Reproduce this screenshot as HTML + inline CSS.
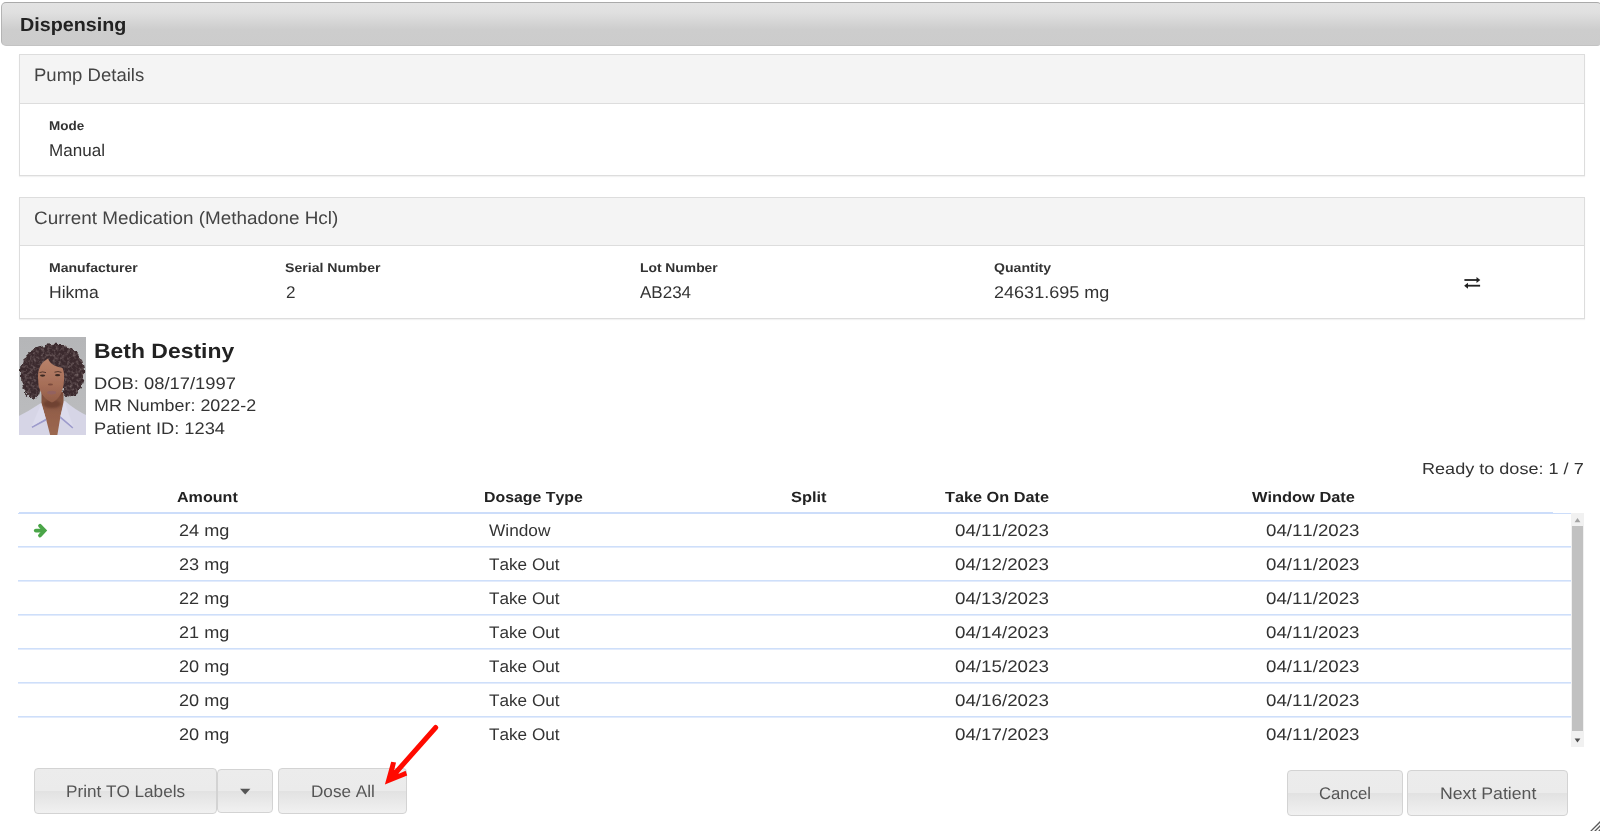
<!DOCTYPE html>
<html lang="en">
<head>
<meta charset="utf-8">
<title>Dispensing</title>
<style>
html,body{margin:0;padding:0;background:#fff;overflow:hidden;}
body{width:1600px;height:831px;position:relative;overflow:hidden;font-family:"Liberation Sans",sans-serif;font-kerning:none;}
.abs{position:absolute;box-sizing:border-box;}
.t{position:absolute;white-space:nowrap;text-rendering:geometricPrecision;line-height:40px;height:40px;transform-origin:0 0;display:block;}
.titlebar{left:1px;top:2px;width:1601px;height:44px;border:1px solid #aaa;border-bottom-color:#c3c3c3;border-left-color:#b4b4b4;border-radius:5px;
  background:linear-gradient(to bottom,#e3e3e3 0%,#e0e0e0 22%,#cdcdcd 64%,#cccccc 100%);}
.panel{left:19px;width:1566px;height:122px;border:1px solid #ddd;background:#fff;box-shadow:0 1px 1px rgba(0,0,0,.05);}
.panel .hd{position:absolute;left:0;top:0;right:0;height:49px;background:#f4f4f4;border-bottom:1px solid #ddd;box-sizing:border-box;}
.hline{background:#ccddfa;}
.rline{left:18px;width:1553px;height:2px;background:linear-gradient(to bottom,#cedffa 0,#cedffa 50%,#e2ebfc 50%,#e2ebfc 100%);}
.btn{border:1px solid #d3d3d3;border-radius:4px;
  background:linear-gradient(to bottom,#ececec 0%,#ebebeb 50%,#e2e2e2 51%,#f1f1f1 100%);}
</style>
</head>
<body>
<div id="app" class="abs" style="left:0;top:0;width:1600px;height:831px;overflow:hidden;">
<div class="abs titlebar"></div>

<div class="abs panel" style="top:54px;"><div class="hd"></div></div>
<div class="abs panel" style="top:197px;"><div class="hd" style="height:48px;"></div></div>

<!-- exchange icon -->
<svg class="abs" style="left:1462px;top:274px;" width="20" height="18" viewBox="0 0 20 18">
  <g fill="#222">
    <rect x="2.4" y="5.1" width="13.6" height="1.8"/><path d="M14.5 2.9L18.3 6L14.5 9.1Z"/>
    <rect x="4" y="10.8" width="14.1" height="1.8"/><path d="M6 8.7L2.1 11.7L6 14.8Z"/>
  </g>
</svg>

<!-- photo -->
<svg class="abs" style="left:19px;top:337px;" width="67" height="98" viewBox="0 0 67 98">
  <defs>
    <filter id="curl" x="-20%" y="-20%" width="140%" height="140%">
      <feTurbulence type="fractalNoise" baseFrequency="0.22" numOctaves="2" seed="7" result="n"/>
      <feDisplacementMap in="SourceGraphic" in2="n" scale="7" xChannelSelector="R" yChannelSelector="G" result="d"/>
      <feGaussianBlur in="d" stdDeviation="0.55"/>
    </filter>
    <filter id="tex" x="0" y="0" width="100%" height="100%">
      <feTurbulence type="fractalNoise" baseFrequency="0.35" numOctaves="2" seed="3" result="n"/>
      <feColorMatrix in="n" type="matrix" values="0 0 0 0 0.42  0 0 0 0 0.34  0 0 0 0 0.33  0 0 0 2.2 -0.95" result="c"/>
      <feComposite in="c" in2="SourceGraphic" operator="in"/>
      <feGaussianBlur stdDeviation="0.5"/>
    </filter>
    <filter id="b1" x="-20%" y="-20%" width="140%" height="140%"><feGaussianBlur stdDeviation="1.1"/></filter>
    <filter id="b2" x="-20%" y="-20%" width="140%" height="140%"><feGaussianBlur stdDeviation="0.7"/></filter>
    <linearGradient id="bgg" x1="0" y1="0" x2="0" y2="1"><stop offset="0" stop-color="#b5b6b8"/><stop offset="1" stop-color="#bcbdbf"/></linearGradient>
    <linearGradient id="skin" x1="0" y1="0" x2="0" y2="1"><stop offset="0" stop-color="#b8826a"/><stop offset="0.6" stop-color="#a66e58"/><stop offset="1" stop-color="#915c47"/></linearGradient>
    <linearGradient id="neck" x1="0" y1="0" x2="0" y2="1"><stop offset="0" stop-color="#7a4a38"/><stop offset="0.5" stop-color="#94604a"/><stop offset="1" stop-color="#9c6850"/></linearGradient>
    <clipPath id="pc"><rect x="0" y="0" width="67" height="98"/></clipPath>
  </defs>
  <g clip-path="url(#pc)">
    <rect width="67" height="98" fill="url(#bgg)"/>
    <!-- shirt -->
    <path d="M-2 99 L-2 80 Q10 74 22 66 L46 64 Q56 73 69 79 L69 99 Z" fill="#d6d5e6" filter="url(#b2)"/>
    <!-- neck + V opening -->
    <path d="M22.5 56 L22.5 67 L27 82 L31.4 99 L38.2 99 L41.5 79 L44.5 65 L44.5 55 Z" fill="url(#neck)" filter="url(#b2)"/>
    <!-- collar shadows -->
    <path d="M12.6 89.6 L26.9 81.6 L27.4 83.4 L13.2 91 Z" fill="#9d9bcc" filter="url(#b2)"/>
    <path d="M54.3 90.2 L41.4 79 L40.9 80.9 L53.4 91.4 Z" fill="#9d9bcc" filter="url(#b2)"/>
    <path d="M22.5 66 L12.6 89.4 L26.7 81.5 Z" fill="#dcdbec" filter="url(#b2)"/>
    <path d="M45.6 64.4 L54.3 90 L41.5 79 Z" fill="#dcdbec" filter="url(#b2)"/>
    <ellipse cx="33" cy="67" rx="9" ry="4" fill="#6f4232" filter="url(#b1)"/>
    <!-- hair -->
    <g filter="url(#curl)">
      <path d="M33 7 C50 5 64 16 65 33 C66 44 62 56 52 60 C46 62 43 56 44 48 L21 48 C22 57 19 63 13 61 C4 57 1 45 2 34 C3 17 16 8 33 7 Z" fill="#3a2c2d"/>
    </g>
    <g filter="url(#tex)" opacity="0.5">
      <path d="M33 7 C50 5 64 16 65 33 C66 44 62 56 52 60 C46 62 43 56 44 48 L21 48 C22 57 19 63 13 61 C4 57 1 45 2 34 C3 17 16 8 33 7 Z" fill="#fff"/>
    </g>
    <!-- face -->
    <path d="M19 40 C19 30 23 25 29 21.5 C31 27 37 30 43.5 31 C45.5 35 45.5 42 44.5 48 C43 57 39 63 33 65.5 C26 63 21 56 19.5 48 Z" fill="url(#skin)" filter="url(#b2)"/>
    <!-- features -->
    <ellipse cx="23.6" cy="38.6" rx="2.6" ry="1.1" fill="#3e2a24" filter="url(#b2)"/>
    <ellipse cx="38.6" cy="38.2" rx="2.6" ry="1.1" fill="#3e2a24" filter="url(#b2)"/>
    <path d="M20.5 35.6 Q23.5 34.2 27 35.6" stroke="#4a3028" stroke-width="0.9" fill="none" filter="url(#b2)"/>
    <path d="M35.5 35.2 Q39 33.8 42.5 35.4" stroke="#4a3028" stroke-width="0.9" fill="none" filter="url(#b2)"/>
    <ellipse cx="31.4" cy="47.4" rx="2.6" ry="1" fill="#7c4c3c" filter="url(#b2)"/>
    <ellipse cx="32.6" cy="55.6" rx="4.6" ry="1.9" fill="#93625f" filter="url(#b2)"/>
  </g>
</svg>

<!-- table header line -->
<div class="abs hline" style="left:19px;top:512px;width:1534px;height:1px;"></div>
<div class="abs hline" style="left:18px;top:513px;width:1553px;height:1px;"></div>
<!-- row lines -->
<div class="abs rline" style="top:546px;"></div>
<div class="abs rline" style="top:580px;"></div>
<div class="abs rline" style="top:614px;"></div>
<div class="abs rline" style="top:648px;"></div>
<div class="abs rline" style="top:682px;"></div>
<div class="abs rline" style="top:716px;"></div>

<!-- green arrow -->
<svg class="abs" style="left:30px;top:520.2px;" width="22" height="22" viewBox="0 0 22 22">
  <g fill="none" stroke="#4aa548" stroke-width="3.8" stroke-linecap="round" stroke-linejoin="miter">
    <path d="M5.8 10.6H13"/>
    <path d="M10 5.8L14.6 10.6L10 15.5"/>
  </g>
</svg>

<!-- scrollbar -->
<div class="abs" style="left:1571px;top:513px;width:13px;height:234px;background:#f1f1f1;"></div>
<div class="abs" style="left:1572px;top:526px;width:11px;height:205px;background:#c1c1c1;"></div>
<svg class="abs" style="left:1571px;top:513px;" width="13" height="13" viewBox="0 0 13 13"><path d="M3.6 9.2L6.5 4.9L9.4 9.2Z" fill="#a3a3a3"/></svg>
<svg class="abs" style="left:1571px;top:734px;" width="13" height="13" viewBox="0 0 13 13"><path d="M3.6 4.6L6.5 8.4L9.4 4.6Z" fill="#505050"/></svg>

<!-- buttons -->
<div class="abs btn" style="left:34px;top:768px;width:183px;height:46px;"></div>
<div class="abs btn" style="left:217px;top:769px;width:56px;height:44px;"></div>
<div class="abs btn" style="left:278px;top:768px;width:129px;height:46px;"></div>
<svg class="abs" style="left:238px;top:786px;" width="14" height="10" viewBox="0 0 14 10"><path d="M2 2.8L12.4 2.8L7.2 8.5Z" fill="#555"/></svg>
<div class="abs btn" style="left:1287px;top:770px;width:116px;height:46px;"></div>
<div class="abs btn" style="left:1407px;top:770px;width:161px;height:46px;"></div>

<span class="t" style="left:20.10px;top:5.60px;font-size:19.04px;transform:scaleX(1.0368);color:#222;font-weight:bold;">Dispensing</span>
<span class="t" style="left:34.40px;top:55.01px;font-size:18.02px;transform:scaleX(1.0284);color:#444;">Pump Details</span>
<span class="t" style="left:48.90px;top:105.76px;font-size:12.72px;transform:scaleX(1.0600);color:#333;font-weight:bold;">Mode</span>
<span class="t" style="left:49.15px;top:130.60px;font-size:17.01px;transform:scaleX(1.0029);color:#333;">Manual</span>
<span class="t" style="left:33.90px;top:197.76px;font-size:18.02px;transform:scaleX(1.0477);color:#444;">Current Medication (Methadone Hcl)</span>
<span class="t" style="left:48.90px;top:248.26px;font-size:12.72px;transform:scaleX(1.1021);color:#333;font-weight:bold;">Manufacturer</span>
<span class="t" style="left:284.90px;top:248.26px;font-size:12.72px;transform:scaleX(1.1079);color:#333;font-weight:bold;">Serial Number</span>
<span class="t" style="left:639.70px;top:248.26px;font-size:12.72px;transform:scaleX(1.0887);color:#333;font-weight:bold;">Lot Number</span>
<span class="t" style="left:994.00px;top:248.26px;font-size:12.72px;transform:scaleX(1.1069);color:#333;font-weight:bold;">Quantity</span>
<span class="t" style="left:48.90px;top:273.00px;font-size:17.01px;transform:scaleX(1.0331);color:#333;">Hikma</span>
<span class="t" style="left:286.20px;top:273.00px;font-size:17.01px;transform:scaleX(1.0045);color:#333;">2</span>
<span class="t" style="left:640.30px;top:273.00px;font-size:17.01px;transform:scaleX(1.0006);color:#333;">AB234</span>
<span class="t" style="left:993.80px;top:273.00px;font-size:17.01px;transform:scaleX(1.0610);color:#333;">24631.695 mg</span>
<span class="t" style="left:94.20px;top:331.81px;font-size:20.78px;transform:scaleX(1.1046);color:#222;font-weight:bold;">Beth Destiny</span>
<span class="t" style="left:94.30px;top:364.00px;font-size:16.72px;transform:scaleX(1.0990);color:#333;">DOB: 08/17/1997</span>
<span class="t" style="left:94.40px;top:386.40px;font-size:16.72px;transform:scaleX(1.0715);color:#333;">MR Number: 2022-2</span>
<span class="t" style="left:94.40px;top:408.90px;font-size:16.72px;transform:scaleX(1.0934);color:#333;">Patient ID: 1234</span>
<span class="t" style="left:1422.15px;top:449.76px;font-size:15.84px;transform:scaleX(1.1413);color:#333;">Ready to dose: 1 / 7</span>
<span class="t" style="left:176.90px;top:478.01px;font-size:14.68px;transform:scaleX(1.0966);color:#222;font-weight:bold;">Amount</span>
<span class="t" style="left:483.90px;top:478.01px;font-size:14.68px;transform:scaleX(1.0813);color:#222;font-weight:bold;">Dosage Type</span>
<span class="t" style="left:790.65px;top:478.01px;font-size:14.68px;transform:scaleX(1.1178);color:#222;font-weight:bold;">Split</span>
<span class="t" style="left:944.50px;top:478.01px;font-size:14.68px;transform:scaleX(1.1090);color:#222;font-weight:bold;">Take On Date</span>
<span class="t" style="left:1252.00px;top:478.01px;font-size:14.68px;transform:scaleX(1.1177);color:#222;font-weight:bold;">Window Date</span>
<span class="t" style="left:178.80px;top:510.71px;font-size:16.72px;transform:scaleX(1.0846);color:#333;">24 mg</span>
<span class="t" style="left:489.40px;top:510.71px;font-size:16.72px;transform:scaleX(1.0334);color:#333;">Window</span>
<span class="t" style="left:955.10px;top:510.71px;font-size:16.72px;transform:scaleX(1.1233);color:#333;">04/11/2023</span>
<span class="t" style="left:1266.00px;top:510.71px;font-size:16.72px;transform:scaleX(1.1180);color:#333;">04/11/2023</span>
<span class="t" style="left:178.80px;top:544.71px;font-size:16.72px;transform:scaleX(1.0846);color:#333;">23 mg</span>
<span class="t" style="left:488.60px;top:544.71px;font-size:16.72px;transform:scaleX(1.0266);color:#333;">Take Out</span>
<span class="t" style="left:955.10px;top:544.71px;font-size:16.72px;transform:scaleX(1.1233);color:#333;">04/12/2023</span>
<span class="t" style="left:1266.00px;top:544.71px;font-size:16.72px;transform:scaleX(1.1180);color:#333;">04/11/2023</span>
<span class="t" style="left:178.80px;top:578.71px;font-size:16.72px;transform:scaleX(1.0846);color:#333;">22 mg</span>
<span class="t" style="left:488.60px;top:578.71px;font-size:16.72px;transform:scaleX(1.0266);color:#333;">Take Out</span>
<span class="t" style="left:955.10px;top:578.71px;font-size:16.72px;transform:scaleX(1.1233);color:#333;">04/13/2023</span>
<span class="t" style="left:1266.00px;top:578.71px;font-size:16.72px;transform:scaleX(1.1180);color:#333;">04/11/2023</span>
<span class="t" style="left:178.80px;top:612.71px;font-size:16.72px;transform:scaleX(1.0846);color:#333;">21 mg</span>
<span class="t" style="left:488.60px;top:612.71px;font-size:16.72px;transform:scaleX(1.0266);color:#333;">Take Out</span>
<span class="t" style="left:955.10px;top:612.71px;font-size:16.72px;transform:scaleX(1.1233);color:#333;">04/14/2023</span>
<span class="t" style="left:1266.00px;top:612.71px;font-size:16.72px;transform:scaleX(1.1180);color:#333;">04/11/2023</span>
<span class="t" style="left:178.80px;top:646.71px;font-size:16.72px;transform:scaleX(1.0846);color:#333;">20 mg</span>
<span class="t" style="left:488.60px;top:646.71px;font-size:16.72px;transform:scaleX(1.0266);color:#333;">Take Out</span>
<span class="t" style="left:955.10px;top:646.71px;font-size:16.72px;transform:scaleX(1.1233);color:#333;">04/15/2023</span>
<span class="t" style="left:1266.00px;top:646.71px;font-size:16.72px;transform:scaleX(1.1180);color:#333;">04/11/2023</span>
<span class="t" style="left:178.80px;top:680.71px;font-size:16.72px;transform:scaleX(1.0846);color:#333;">20 mg</span>
<span class="t" style="left:488.60px;top:680.71px;font-size:16.72px;transform:scaleX(1.0266);color:#333;">Take Out</span>
<span class="t" style="left:955.10px;top:680.71px;font-size:16.72px;transform:scaleX(1.1233);color:#333;">04/16/2023</span>
<span class="t" style="left:1266.00px;top:680.71px;font-size:16.72px;transform:scaleX(1.1180);color:#333;">04/11/2023</span>
<span class="t" style="left:178.80px;top:714.71px;font-size:16.72px;transform:scaleX(1.0846);color:#333;">20 mg</span>
<span class="t" style="left:488.60px;top:714.71px;font-size:16.72px;transform:scaleX(1.0266);color:#333;">Take Out</span>
<span class="t" style="left:955.10px;top:714.71px;font-size:16.72px;transform:scaleX(1.1233);color:#333;">04/17/2023</span>
<span class="t" style="left:1266.00px;top:714.71px;font-size:16.72px;transform:scaleX(1.1180);color:#333;">04/11/2023</span>
<span class="t" style="left:65.65px;top:772.00px;font-size:16.86px;transform:scaleX(1.0164);color:#555;">Print TO Labels</span>
<span class="t" style="left:310.65px;top:772.00px;font-size:16.86px;transform:scaleX(1.0163);color:#555;">Dose All</span>
<span class="t" style="left:1318.90px;top:774.25px;font-size:16.86px;transform:scaleX(0.9918);color:#555;">Cancel</span>
<span class="t" style="left:1440.40px;top:774.25px;font-size:16.86px;transform:scaleX(1.0491);color:#555;">Next Patient</span>

<!-- red annotation arrow -->
<svg class="abs" style="left:370px;top:715px;" width="80" height="80" viewBox="370 715 80 80">
  <path d="M435.7 727.5L394.5 774" stroke="#ff0a00" stroke-width="5" stroke-linecap="round" fill="none"/>
  <path d="M384.9 784.5L391.2 761.7L396 762.6L394.3 769.8L398.9 773.7L405.6 770.8L407.2 775.4Z" fill="#ff0a00"/>
</svg>

<!-- resize grip -->
<svg class="abs" style="left:1588px;top:819px;" width="12" height="12" viewBox="0 0 12 12">
  <g stroke="#5a5a5a" stroke-width="1.25" fill="none"><path d="M2 13L13 2"/><path d="M6 13L13 6"/><path d="M10 13L13 10"/></g>
</svg>
</div>
</body>
</html>
